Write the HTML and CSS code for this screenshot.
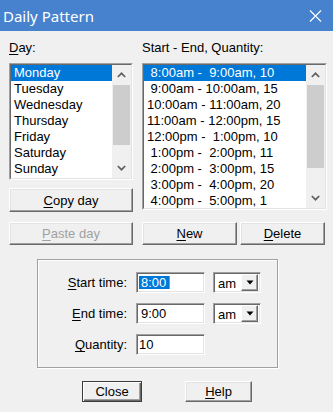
FILE: index.html
```html
<!DOCTYPE html>
<html>
<head>
<meta charset="utf-8">
<title>Daily Pattern</title>
<link rel="stylesheet" href="styles.css">
</head>
<body>
<div class="window">
  <div class="titlebar">
    <span class="title">Daily Pattern</span>
    <svg class="close-x" width="13" height="12" viewBox="0 0 13 12"><path d="M1 0.5L12 11.5M12 0.5L1 11.5" stroke="#fff" stroke-width="1.1" fill="none"/></svg>
  </div>
  <div class="main">
    <div class="lists">
      <div class="lbl"><u>D</u>ay:</div>
      <div class="lbl">Start - End, Quantity:</div>

      <div class="leftcol">
        <div class="listbox small">
          <div class="lb-in">
            <div class="items">
              <div class="item sel">Monday</div>
              <div class="item">Tuesday</div>
              <div class="item">Wednesday</div>
              <div class="item">Thursday</div>
              <div class="item">Friday</div>
              <div class="item">Saturday</div>
              <div class="item">Sunday</div>
            </div>
            <div class="sbar">
              <div class="arrow"><svg width="9" height="6" viewBox="0 0 9 6"><polyline points="0.8,5 4.5,1.3 8.2,5" stroke="#606060" stroke-width="1.7" fill="none"/></svg></div>
              <div class="track"><div class="thumb thumb-small"></div></div>
              <div class="arrow"><svg width="9" height="6" viewBox="0 0 9 6"><polyline points="0.8,1 4.5,4.7 8.2,1" stroke="#606060" stroke-width="1.7" fill="none"/></svg></div>
            </div>
          </div>
        </div>
        <div class="btn copy"><span><u>C</u>opy day</span></div>
      </div>

      <div class="listbox big">
        <div class="lb-in">
          <div class="items">
            <div class="item sel"> 8:00am -  9:00am, 10</div>
            <div class="item"> 9:00am - 10:00am, 15</div>
            <div class="item">10:00am - 11:00am, 20</div>
            <div class="item">11:00am - 12:00pm, 15</div>
            <div class="item">12:00pm -  1:00pm, 10</div>
            <div class="item"> 1:00pm -  2:00pm, 11</div>
            <div class="item"> 2:00pm -  3:00pm, 15</div>
            <div class="item"> 3:00pm -  4:00pm, 20</div>
            <div class="item"> 4:00pm -  5:00pm, 1</div>
          </div>
          <div class="sbar">
            <div class="arrow"><svg width="9" height="6" viewBox="0 0 9 6"><polyline points="0.8,5 4.5,1.3 8.2,5" stroke="#606060" stroke-width="1.7" fill="none"/></svg></div>
            <div class="track"><div class="thumb thumb-big"></div></div>
            <div class="arrow"><svg width="9" height="6" viewBox="0 0 9 6"><polyline points="0.8,1 4.5,4.7 8.2,1" stroke="#606060" stroke-width="1.7" fill="none"/></svg></div>
          </div>
        </div>
      </div>

      <div class="btn paste disabled"><span><u>P</u>aste day</span></div>
      <div class="btnrow">
        <div class="btn new"><span><u>N</u>ew</span></div>
        <div class="btn del"><span><u>D</u>elete</span></div>
      </div>
    </div>

    <div class="group">
      <div class="form">
        <div class="flabel"><u>S</u>tart time:</div>
        <div class="field"><span class="selection">8:00</span><span class="caret"></span></div>
        <div class="combo"><span class="combo-text">am</span><span class="combo-btn"><svg width="8" height="5" viewBox="0 0 8 5"><polygon points="0.5,0.5 7.5,0.5 4,4.5" fill="#000"/></svg></span></div>

        <div class="flabel"><u>E</u>nd time:</div>
        <div class="field"><span class="ftext">9:00</span></div>
        <div class="combo"><span class="combo-text">am</span><span class="combo-btn"><svg width="8" height="5" viewBox="0 0 8 5"><polygon points="0.5,0.5 7.5,0.5 4,4.5" fill="#000"/></svg></span></div>

        <div class="flabel"><u>Q</u>uantity:</div>
        <div class="field"><span class="ftext qty">10</span></div>
      </div>
    </div>

    <div class="actions">
      <div class="btn close default"><span>Close</span></div>
      <div class="btn help"><span><u>H</u>elp</span></div>
    </div>
  </div>
</div>
</body>
</html>
```

FILE: styles.css
```css
* { box-sizing: border-box; }
html, body { margin: 0; padding: 0; }
body {
  width: 333px;
  height: 412px;
  overflow: hidden;
  background: #f0f0f0;
  font-family: "Liberation Sans", Arial, sans-serif;
  font-size: 13px;
  color: #000;
}
u { text-decoration: underline; text-underline-offset: 2px; }

.titlebar {
  height: 31px;
  background: #4682cd;
  display: flex;
  align-items: center;
  justify-content: space-between;
  padding: 0 11px 0 3px;
}
.title {
  color: #fff;
  font-family: "Noto Sans", sans-serif;
  font-size: 15px;
}
.close-x { display: block; }

.main { padding: 9px 6px 0 9px; }

.lists {
  display: grid;
  grid-template-columns: 124px 185px;
  column-gap: 9px;
}
.lbl { height: 16px; line-height: 16px; margin-bottom: 7px; }

.listbox {
  border: 1px solid;
  border-color: #a0a0a0 #fff #fff #a0a0a0;
}
.listbox.small { height: 117px; }
.listbox.big { height: 147px; }
.lb-in {
  height: 100%;
  border: 1px solid;
  border-color: #696969 #e3e3e3 #e3e3e3 #696969;
  background: #fff;
  display: flex;
}
.items { flex: 1; overflow: hidden; min-width: 0; }
.item {
  height: 16px;
  line-height: 16px;
  padding-left: 3px;
  white-space: pre;
}
.item.sel { background: #0078d7; color: #fff; }

.sbar {
  width: 19px;
  background: #f0f0f0;
  display: flex;
  flex-direction: column;
}
.arrow {
  height: 20px;
  display: flex;
  align-items: center;
  justify-content: center;
}
.track { flex: 1; padding: 0 1px; }
.thumb { background: #cdcdcd; }
.thumb-small { height: 60px; }
.thumb-big { height: 83px; }

.btn {
  border: 1px solid;
  border-color: #fff #696969 #696969 #fff;
  box-shadow: inset -1px -1px #a0a0a0, inset 1px 1px #e3e3e3;
  background: #f0f0f0;
  display: flex;
  align-items: center;
  justify-content: center;
  white-space: nowrap;
}
.btn.copy { height: 24px; margin-top: 8px; }
.btn.paste { height: 23px; margin-top: 10px; }
.btn.disabled { color: #a0a0a0; }
.btnrow { display: flex; gap: 3px; margin-top: 10px; height: 23px; }
.btn.new { width: 95px; }
.btn.del { width: 85px; }

.group {
  margin: 14px 0 0 28px;
  width: 241px;
  height: 109px;
  border: 1px solid #a0a0a0;
  box-shadow: inset 1px 1px #fff, 1px 1px #fff;
  padding-top: 12px;
}
.form {
  display: grid;
  grid-template-columns: 90px 69px 48px;
  grid-auto-rows: 21px;
  column-gap: 8px;
  row-gap: 10px;
}
.flabel {
  text-align: right;
  padding-right: 1px;
  line-height: 21px;
}
.field, .combo {
  border: 1px solid;
  border-color: #a0a0a0 #fff #fff #a0a0a0;
  box-shadow: inset 1px 1px #696969, inset -1px -1px #e3e3e3;
  background: #fff;
  display: flex;
  align-items: center;
}
.field { padding-left: 2px; }
.selection {
  background: #0078d7;
  color: #fff;
  height: 13px;
  line-height: 13px;
  padding: 0 3px 0 2px;
}
.caret { width: 1px; height: 13px; background: #e8821e; }
.ftext { padding-left: 2px; }
.ftext.qty { padding-left: 0; }
.combo { padding: 2px 2px 2px 0; justify-content: space-between; }
.combo-text { padding-left: 4px; padding-top: 2px; }
.combo-btn {
  width: 17px;
  height: 17px;
  border: 1px solid;
  border-color: #fff #696969 #696969 #fff;
  box-shadow: inset -1px -1px #a0a0a0;
  background: #f0f0f0;
  display: flex;
  align-items: center;
  justify-content: center;
}

.actions {
  display: flex;
  gap: 43px;
  padding-left: 73px;
  margin-top: 13px;
}
.btn.close { width: 60px; height: 21px; }
.btn.help { width: 67px; height: 21px; }
.btn.default {
  border-color: #3c3c3c;
  box-shadow: inset 1px 1px #fff, inset -1px -1px #696969, inset -2px -2px #a0a0a0;
}
```
